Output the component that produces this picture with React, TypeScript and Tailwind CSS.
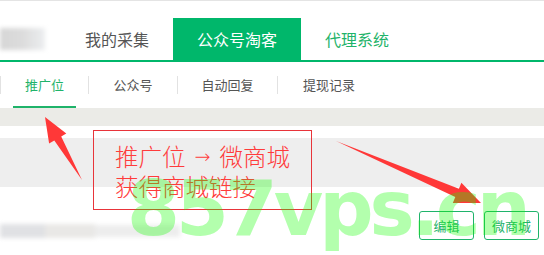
import React from 'react';

const mainTabs = [
  { label: '我的采集', active: false },
  { label: '公众号淘客', active: true },
  { label: '代理系统', active: false, green: true },
];

const subTabs = [
  { label: '推广位', w: 'w-[87px]', active: true },
  { label: '公众号', w: 'w-[88px]' },
  { label: '自动回复', w: 'w-[99px]' },
  { label: '提现记录', w: 'w-[102px]' },
];

function Sep() {
  return <div className="h-[18px] w-px bg-[#e2e2e2]" />;
}

export default function App() {
  return (
    <div
      className="relative w-[544px] h-[255px] overflow-hidden bg-white"
      style={{ fontFamily: '"Noto Sans CJK SC", "Liberation Sans", sans-serif' }}
    >
      <div className="h-px bg-[#e4e4e4]" />

      {/* main tabs */}
      <div className="flex items-end h-[61px] pt-[17px] border-b-2 border-[#00b76b]">
        <div className="w-[61px] h-full flex items-center">
          <div className="w-[45px] h-[22px] bg-gradient-to-r from-[#d6d6d6] via-[#dcdcdc] to-[#eceef0] blur-[2px]" />
        </div>
        {mainTabs.map(t => (
          <div
            key={t.label}
            className={`h-full flex items-center px-6 text-[16px] ${
              t.active ? 'bg-[#00b76b] text-white' : t.green ? 'text-[#1fb36a]' : 'text-[#555]'
            }`}
          >
            {t.label}
          </div>
        ))}
      </div>

      {/* sub tabs */}
      <div className="flex items-center h-[46px]">
        {subTabs.map(t => (
          <React.Fragment key={t.label}>
            <Sep />
            <div
              className={`relative h-full flex items-center justify-center text-[13px] ${t.w} ${
                t.active ? 'text-[#1fb36a]' : 'text-[#555]'
              }`}
            >
              {t.label}
              {t.active && <div className="absolute bottom-0 left-[12px] w-[63px] h-[2px] bg-[#1fb36a]" />}
            </div>
          </React.Fragment>
        ))}
      </div>

      <div className="h-[18px] bg-[#ebebe7]" />
      <div className="h-[12px]" />
      <div className="h-[49px] bg-[#eeeeee]" />

      {/* row */}
      <div className="flex items-start justify-between pt-[24px] pr-[5px]">
        <div className="flex items-center mt-[12px] h-[16px] blur-[2px]">
          <div className="w-[45px] h-[14px] bg-[#e0e1e4]" />
          <div className="w-[50px] h-[14px] bg-[#e9e8e6]" />
          <div className="w-[85px] h-[12px] bg-[#ededed]" />
        </div>
        <div className="flex gap-[10px]">
          <button className="w-[55px] h-[29px] rounded-[3px] border-[1.5px] border-[#1fb36a] text-[13px] text-[#1fb36a] flex items-center justify-center">
            编辑
          </button>
          <button className="w-[55px] h-[29px] rounded-[3px] border-[1.5px] border-[#1fb36a] text-[13px] text-[#1fb36a] flex items-center justify-center">
            微商城
          </button>
        </div>
      </div>

      {/* annotation */}
      <div className="absolute left-[93px] top-[130px] w-[219px] h-[80px] border border-[#e8343a] pl-[21px] pt-[10px]">
        <div className="text-[23.5px] leading-[30px] font-light text-[#ff3b3b]">
          <div className="flex items-center whitespace-nowrap">
            推广位
            <span className="mx-[9px] text-[19px] leading-none" style={{ fontFamily: '"DejaVu Sans", sans-serif' }}>
              →
            </span>
            微商城
          </div>
          <div>获得商城链接</div>
        </div>
      </div>

      <svg className="absolute inset-0" width="544" height="255" viewBox="0 0 544 255">
        <polygon
          fill="#ff3838"
          points="82,180 61.2,136.5 66.3,133.4 45,117 49.1,143.6 54.3,140.5"
        />
        <polygon
          fill="#ff3838"
          points="336,141 458.9,188.7 461.4,182.7 481,203 452.8,202.9 455.3,196.9"
        />
      </svg>

      {/* watermark */}
      <div
        className="absolute left-[127px] top-[171px] text-[76px] leading-none font-bold tracking-[-4px] whitespace-nowrap text-[rgba(20,255,0,0.32)]"
        style={{ fontFamily: '"DejaVu Sans", sans-serif' }}
      >
        857vps.cn
      </div>
    </div>
  );
}
